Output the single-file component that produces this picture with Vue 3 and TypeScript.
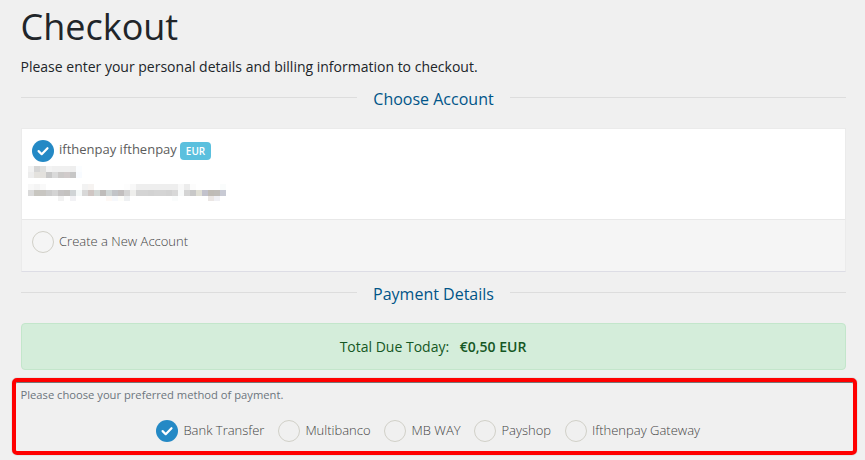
<script setup lang="ts">
import { ref } from 'vue'

const methods: string[] = ['Bank Transfer', 'Multibanco', 'MB WAY', 'Payshop', 'Ifthenpay Gateway']
const selectedMethod = ref('Bank Transfer')
const account = ref('existing')

// Redacted account details, one colour per 6px tile; '-' leaves a tile empty
const nameTiles: string[][] = [
  'f2f2f2 d6d6d6 e0e0de f3f3f3 f0f0f0 f0f0f0 f0f0f0 eeeeee fbfdff'.split(' '),
  'ededed e4e2de e3e1dd c8c8c8 dadada cccac9 d1cbcb c6c6c6 f8fbff'.split(' '),
]
const addressTiles: string[][] = [
  'f8f8f8 f4f4f4 f9f9f9 - - - - - - f2f2f2 f6f3f1 - - - - - fdfdfd f8f8f8 eeeeee eeeeee eeeeee eeeeee eeeeee eeeeee eeeeee f8f8f8 ececec fcfcfc - - - - fafcfc'.split(' '),
  'dadada c8c6c0 c8c6c2 cccccc d4d4d4 c6c4c4 c4c2c0 d0d4d6 f4f8f8 d8d8d8 cfc6c3 d3d8d6 bfbcba d0d6d6 c2c4c8 c2bfbf d4d4d4 eeeeec d4d4d4 d4d4d4 d2d2d2 d4d4d4 d4d4d4 d2d2d2 d8d8d8 f8fafa d4d4d4 c8c8c8 e0dfd5 c2c2cc bfbbb5 bfbcb8 c8cad4'.split(' '),
  '- - - - - f2f2f2 - f2f2f5 - - - - - fdf8f5 f6f8fc fdfdfa eef0f2 - - - - - - - fafcfc - - - - - ebe6e4 f0f0f4 -'.split(' '),
]
const tileColor = (c: string) => ({ background: c === '-' ? 'transparent' : `#${c}` })
</script>

<template>
  <main class="checkout">
    <h1>Checkout</h1>
    <p class="intro">Please enter your personal details and billing information to checkout.</p>

    <h2 class="section-title"><span>Choose Account</span></h2>

    <section class="accounts">
      <div class="account active">
        <div class="choice" @click="account = 'existing'">
          <span class="radio" :class="{ checked: account === 'existing' }">
            <svg v-if="account === 'existing'" viewBox="0 0 22 22"><path d="M6.6 11.1l3.1 3.1 5.8-6" /></svg>
          </span>
          <span class="account-name">ifthenpay ifthenpay</span>
          <span class="badge">EUR</span>
        </div>
        <div class="redacted">
          <div v-for="(row, r) in nameTiles" :key="r" class="tile-row">
            <i v-for="(c, i) in row" :key="i" :style="tileColor(c)"></i>
          </div>
        </div>
        <div class="redacted address">
          <div v-for="(row, r) in addressTiles" :key="r" class="tile-row">
            <i v-for="(c, i) in row" :key="i" :style="tileColor(c)"></i>
          </div>
        </div>
      </div>
      <div class="account new">
        <div class="choice" @click="account = 'new'">
          <span class="radio" :class="{ checked: account === 'new' }">
            <svg v-if="account === 'new'" viewBox="0 0 22 22"><path d="M6.6 11.1l3.1 3.1 5.8-6" /></svg>
          </span>
          <span class="new-label">Create a New Account</span>
        </div>
      </div>
    </section>

    <h2 class="section-title payment-title"><span>Payment Details</span></h2>

    <div class="total">Total Due Today: <strong>€0,50 EUR</strong></div>

    <section class="payment">
      <p>Please choose your preferred method of payment.</p>
      <div class="methods">
        <div v-for="m in methods" :key="m" class="choice" @click="selectedMethod = m">
          <span class="radio" :class="{ checked: selectedMethod === m }">
            <svg v-if="selectedMethod === m" viewBox="0 0 22 22"><path d="M6.6 11.1l3.1 3.1 5.8-6" /></svg>
          </span>
          <span class="method-name">{{ m }}</span>
        </div>
      </div>
    </section>
    <div class="highlight"></div>
  </main>
</template>

<style>
body {
  background: #f0f0f0;
  overflow: hidden;
}
</style>

<style scoped>
.checkout {
  position: relative;
  box-sizing: border-box;
  height: 460px;
  padding: 0 19px 0 21px;
  overflow: hidden;
  background: #f0f0f0;
  color: #212529;
  font-family: "Open Sans", "Noto Sans", sans-serif;
  font-size: 14px;
}
h1, h2, p { margin: 0; font-weight: 400; }
h1 {
  height: 56px;
  margin-left: -0.5px;
  font-size: 36px;
  line-height: 54px;
}
.intro {
  height: 34px;
  margin-left: -0.5px;
  line-height: 21px;
}
.section-title {
  display: flex;
  height: 38px;
  color: #058;
  font-size: 16px;
  line-height: 18px;
}
.section-title::before,
.section-title::after {
  content: "";
  flex: 1;
  height: 1px;
  margin-top: 7px;
  background: #ddd;
}
.section-title span { padding: 0 17px; }
.section-title::before { margin-right: -0.5px; }
.section-title::after { margin-left: -0.5px; }
.accounts {
  box-sizing: border-box;
  height: 144px;
  border: 1px solid #ebebeb;
  border-bottom-color: #dddde5;
  background: #fff;
}
.account {
  box-sizing: border-box;
  padding: 11px 0 0 10px;
  color: #5c5c5c;
}
.account.active { height: 90px; }
.account.new {
  height: 52px;
  border-top: 1px solid #e8e8e8;
  background: #f5f5f5;
}
.choice {
  display: flex;
  align-items: center;
  white-space: nowrap;
}
.radio {
  box-sizing: border-box;
  flex: none;
  width: 22px;
  height: 22px;
  border: 1px solid #d1d0c8;
  border-radius: 50%;
}
.radio.checked { border: 0; background: #2489c5; }
.radio svg { display: block; width: 22px; height: 22px; }
.radio path {
  fill: none;
  stroke: #fff;
  stroke-width: 2.2;
  stroke-linecap: round;
  stroke-linejoin: round;
}
.account-name, .new-label { margin: -4px 0 0 5px; font-size: 13px; }
.new-label { margin-top: -3px; color: #444; font-weight: 300; }
.badge {
  height: 18px;
  margin-left: 3px;
  padding: 0 6px;
  border-radius: 4px;
  background: #5bc0de;
  color: #fff;
  font-size: 10px;
  font-weight: 600;
  line-height: 18px;
}
.redacted { margin: 4px 0 0 -4px; }
.redacted.address { margin-top: 6px; }
.tile-row { display: flex; height: 6px; }
.tile-row i { width: 6px; height: 6px; }
.address .tile-row:last-child i { height: 5px; }
.payment-title { margin-top: 13px; }
.total {
  box-sizing: border-box;
  height: 47px;
  padding-right: 1px;
  border: 1px solid #c3e6cb;
  border-radius: 4px;
  background: #d4edda;
  color: #155724;
  line-height: 45px;
  text-align: center;
}
.total strong { margin-left: 7px; font-weight: 600; }
.payment { padding-top: 16px; }
.payment p {
  height: 34px;
  margin-left: -0.5px;
  color: #6c757d;
  font-size: 11.2px;
  line-height: 18px;
}
.methods {
  display: flex;
  justify-content: center;
  gap: 13.45px;
  padding-right: 11px;
}
.method-name {
  margin: -2px 0 0 5.5px;
  color: #444;
  font-size: 13px;
  font-weight: 300;
}
.highlight {
  position: absolute;
  top: 378px;
  left: 12px;
  box-sizing: border-box;
  width: 845px;
  height: 77px;
  border: 4px solid #f00;
  border-radius: 5px;
  box-shadow: inset 0 1px 0 #777, 0 0 1px #777;
  pointer-events: none;
}
</style>
